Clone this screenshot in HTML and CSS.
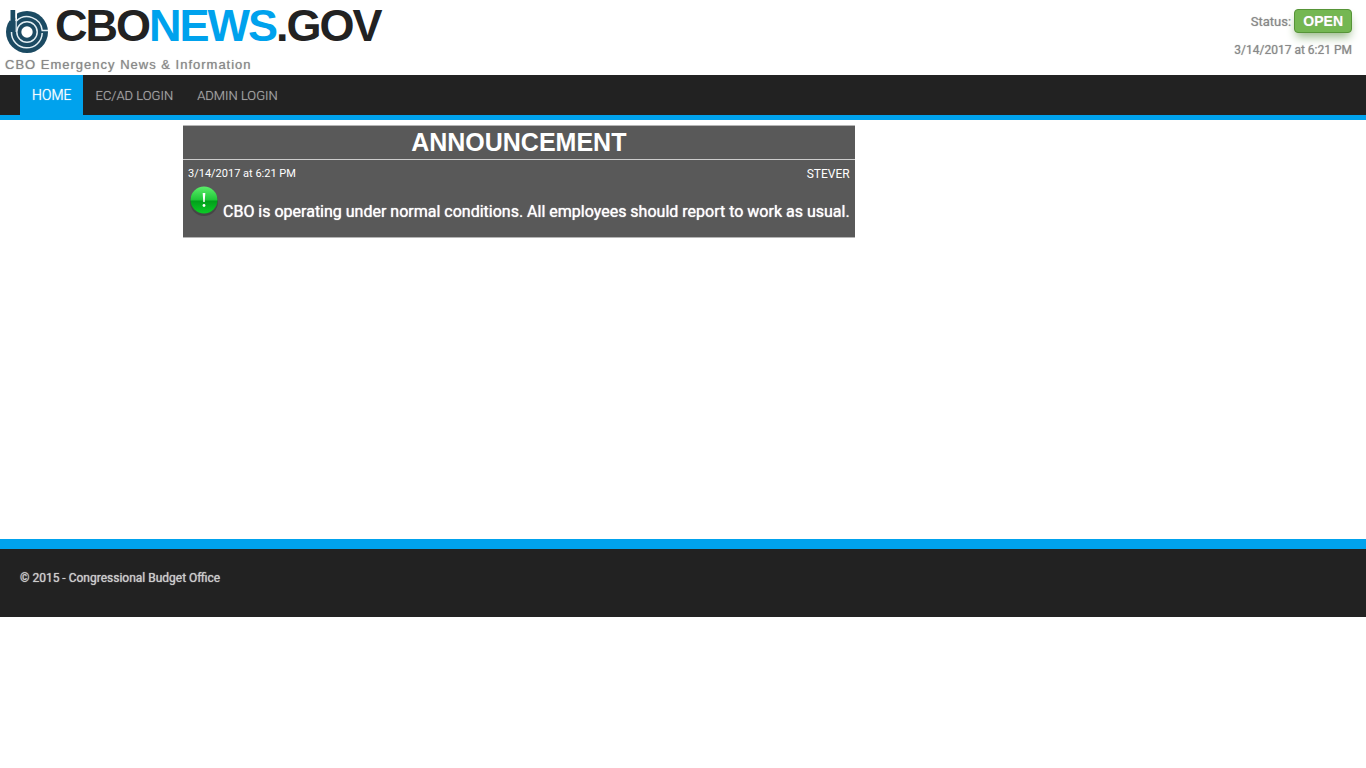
FILE: index.html
```html
<!DOCTYPE html>
<html lang="en">
<head>
<meta charset="utf-8">
<title>CBONEWS.GOV</title>
<link rel="stylesheet" href="styles.css">
</head>
<body>
<header class="masthead">
  <div class="brand">
    <div class="brand-row">
      <svg class="logo" viewBox="0 0 44 46" aria-hidden="true">
        <circle cx="22" cy="24" r="21" fill="#1b4a62"/>
        <path d="M0 0h12v9L5 13v-1L0 17z" fill="#fff"/>
        <path d="M5.500 2h5v24h-5z" fill="#1b4a62"/>
        <path d="M11.200 2v11" stroke="#fff" stroke-width="1.600"/>
        <path d="M11.200 13.200A15.300 15.300 0 0 1 37.200 22.500H43" fill="none" stroke="#e3eef3" stroke-width="1.500"/>
        <path d="M6.500 24A15.300 15.300 0 1 0 37.200 25" fill="none" stroke="#e3eef3" stroke-width="1.500"/>
        <path d="M11.200 12v12" stroke="#e3eef3" stroke-width="1.200"/>
        <circle cx="22" cy="24" r="10.200" fill="none" stroke="#e3eef3" stroke-width="1.500"/>
        <circle cx="22" cy="24" r="5.700" fill="#fff"/>
      </svg>
      <h1 class="site-name">CBO<span class="accent">NEWS</span>.GOV</h1>
    </div>
    <p class="tagline">CBO Emergency News &amp; Information</p>
  </div>
  <div class="status">
    <div class="status-line">Status: <span class="badge">OPEN</span></div>
    <div class="status-time">3/14/2017 at 6:21 PM</div>
  </div>
</header>
<nav class="menu">
  <a class="menu-link active" href="#">HOME</a>
  <a class="menu-link" href="#">EC/AD LOGIN</a>
  <a class="menu-link" href="#">ADMIN LOGIN</a>
</nav>
<main class="content">
  <article class="notice">
    <h2 class="notice-title">ANNOUNCEMENT</h2>
    <div class="notice-meta"><span class="notice-time">3/14/2017 at 6:21 PM</span><span>STEVER</span></div>
    <div class="notice-body">
      <svg class="notice-icon" viewBox="0 0 32 32" aria-hidden="true">
        <defs>
          <linearGradient id="ball" x1="0" y1="0" x2="0" y2="1">
            <stop offset="0" stop-color="#5bee6a"/>
            <stop offset=".48" stop-color="#22c83a"/>
            <stop offset=".55" stop-color="#02a01b"/>
            <stop offset="1" stop-color="#0ccb26"/>
          </linearGradient>
        </defs>
        <circle cx="16" cy="17" r="14" fill="#333" opacity=".5"/>
        <circle cx="16" cy="15" r="13.500" fill="url(#ball)"/>
        <path d="M14.700 8h2.600l-.6 9h-1.400z" fill="#fff"/>
        <circle cx="16" cy="20.500" r="1.400" fill="#fff"/>
      </svg>
      <p class="notice-text">CBO is operating under normal conditions. All employees should report to work as usual.</p>
    </div>
  </article>
</main>
<footer class="footer">© 2015 - Congressional Budget Office</footer>
</body>
</html>
```
FILE: styles.css
```css
* { box-sizing: border-box; }
body { margin: 0; background: #fff; font-family: Roboto, sans-serif; font-size: 12px; }
h1, h2, p { margin: 0; }
.masthead { display: flex; justify-content: space-between; padding: 0 14px 0 5px; min-height: 75px; }
.brand-row { display: flex; align-items: flex-start; padding-top: 2px; height: 57px; gap: 6px; }
.logo { width: 44px; height: 46px; margin-top: 6px; }
.site-name { font: bold 45px/48px "Liberation Sans", Arial, sans-serif; letter-spacing: -2px; color: #222; }
.accent { color: #00a2ed; }
.tagline { font: 13px/16px "Liberation Sans", Arial, sans-serif; letter-spacing: 1px; color: #888; text-shadow: 0 0 1px #aaa; }
.status { padding-top: 9px; text-align: right; color: #888; text-shadow: 0 0 1px #aaa; }
.status-line { font-size: 13px; line-height: 26px; }
.badge { display: inline-block; padding: 0 8px; border: 1px solid #569438; border-radius: 4px; background: #74b752; box-shadow: 0 6px 10px -2px #9aba8b; color: #fff; font: bold 14px/22px "Liberation Sans", Arial, sans-serif; }
.status-time { margin-top: 7px; line-height: 16px; }
.menu { display: flex; padding-left: 20px; background: #222; border-bottom: 5px solid #00a2ed; }
.menu-link { padding: 1px 12px 0; color: #aaa; font-size: 13px; font-weight: 300; line-height: 39px; text-decoration: none; text-shadow: 0 0 1px #777; }
.menu-link.active { background: #00a2ed; color: #fff; font-size: 14px; text-shadow: 0 0 1px #fff; }
.content { display: flex; align-items: flex-start; min-height: 419px; padding: 5px 183px; }
.notice { border-top: 1px solid #b5b5b5; border-bottom: 1px solid #b5b5b5; background: #595959; color: #fff; }
.notice-title { border-bottom: 1px solid #ccc; text-align: center; font: bold 25px/33px "Liberation Sans", Arial, sans-serif; }
.notice-meta { display: flex; justify-content: space-between; padding: 6px 5px 0; line-height: 16px; }
.notice-time { font-size: 11px; }
.notice-body { display: flex; align-items: flex-start; gap: 3px; padding: 3px 5px 15px; }
.notice-icon { width: 32px; height: 32px; flex: none; }
.notice-text { padding-top: 17px; font-size: 16px; line-height: 20px; text-shadow: 0 0 1px #fff; }
.footer { min-height: 78px; padding: 20px; border-top: 10px solid #00a2ed; background: #222; color: #ccc; line-height: 18px; text-shadow: 0 0 1px #ccc; }
```
